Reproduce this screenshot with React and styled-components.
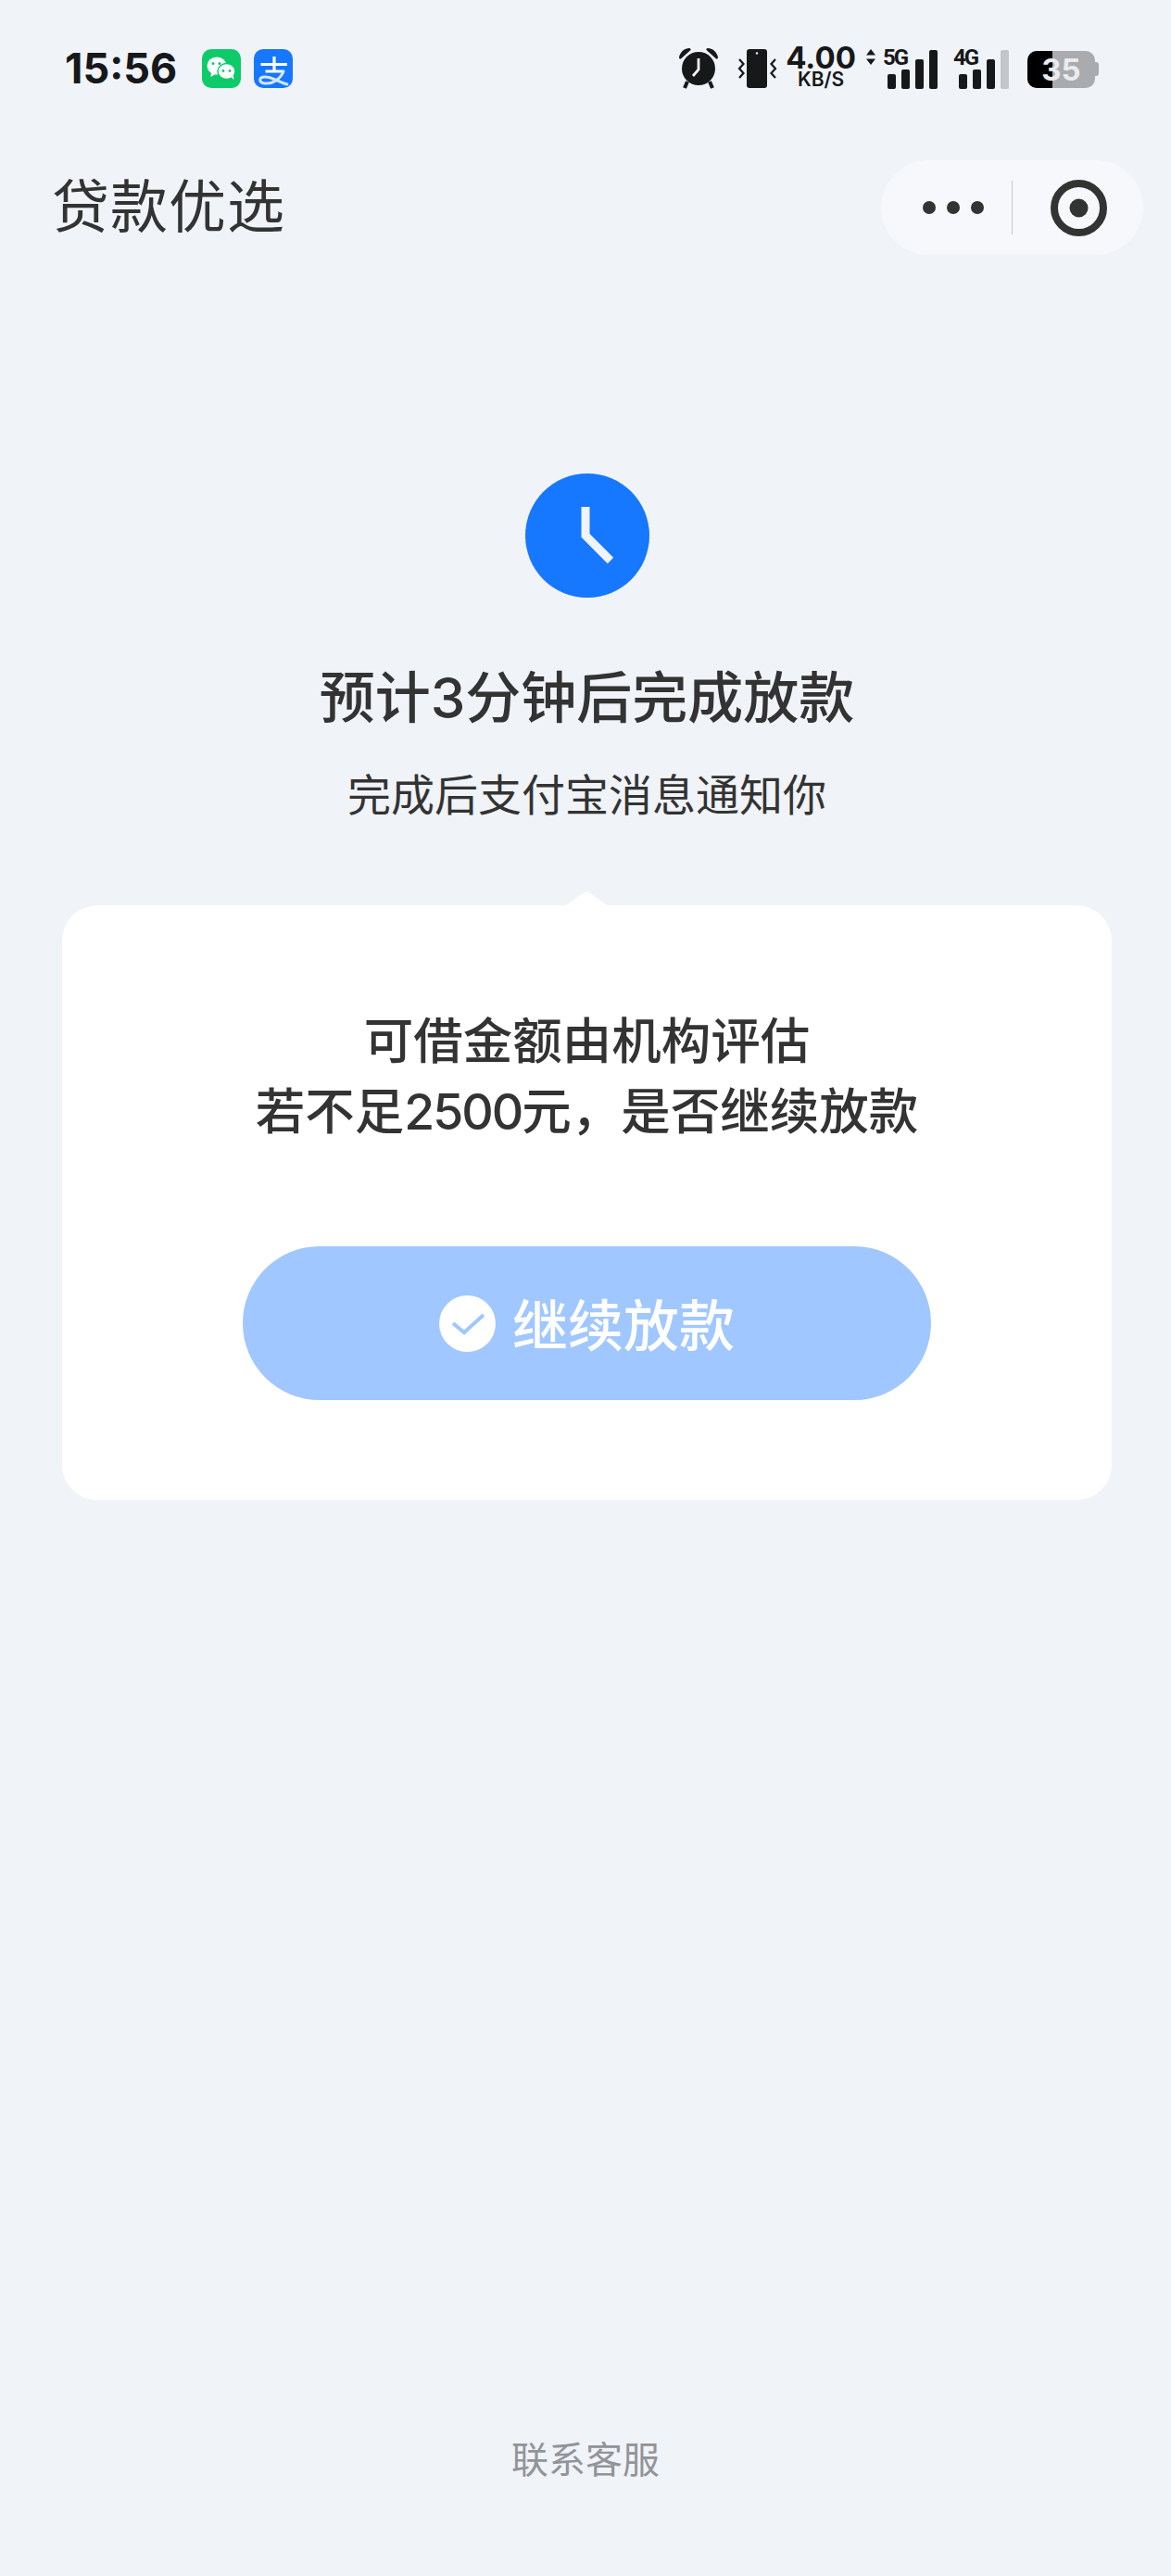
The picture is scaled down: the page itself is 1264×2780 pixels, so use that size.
import React from 'react';
import styled, { createGlobalStyle } from 'styled-components';

const GlobalStyle = createGlobalStyle`
  html, body {
    margin: 0;
    padding: 0;
    background: #f0f3f8;
  }
  * {
    box-sizing: border-box;
  }
`;

const App = () => (
  <>
    <GlobalStyle />
    <Page>
      <StatusBar>
        <StatusLeft>
          <Time>15:56</Time>
          <AppIcons>
            <WeChatIcon />
            <AlipayIcon />
          </AppIcons>
        </StatusLeft>
        <StatusRight>
          <AlarmIcon />
          <VibrateIcon />
          <Speed>
            <SpeedValue>4.00</SpeedValue>
            <SpeedUnit>KB/S</SpeedUnit>
          </Speed>
          <Signal $width={77} $ml={13}>
            <Arrows />
            <SignalLabel $left={18}>5G</SignalLabel>
            <SignalBars levels={[1, 1, 1, 1]} />
          </Signal>
          <Signal $width={60} $ml={17}>
            <SignalLabel $left={0}>4G</SignalLabel>
            <SignalBars levels={[1, 1, 1, 0]} />
          </Signal>
          <Battery>
            <BatteryFill />
            <BatteryCap />
            <BatteryText>35</BatteryText>
          </Battery>
        </StatusRight>
      </StatusBar>

      <NavBar>
        <NavTitle>贷款优选</NavTitle>
        <Capsule>
          <MoreDots>
            <Dot />
            <Dot />
            <Dot />
          </MoreDots>
          <CapsuleDivider />
          <TargetIcon />
        </Capsule>
      </NavBar>

      <Hero>
        <ClockIcon />
        <Heading>预计3分钟后完成放款</Heading>
        <SubHeading>完成后支付宝消息通知你</SubHeading>
      </Hero>

      <Card>
        <Notch />
        <CardText>
          可借金额由机构评估
          <br />
          若不足<Amount>2500</Amount>元，是否继续放款
        </CardText>
        <ContinueButton>
          <CheckIcon />
          继续放款
        </ContinueButton>
      </Card>

      <Footer>联系客服</Footer>
    </Page>
  </>
);

const WeChatIcon = () => (
  <svg width="42" height="42" viewBox="0 0 42 42">
    <rect width="42" height="42" rx="10" fill="#0ecb6a" />
    <ellipse cx="16" cy="18" rx="10.500" ry="9.500" fill="#fff" />
    <path d="M10 24l-.5 6 6-3.500z" fill="#fff" />
    <ellipse cx="26.500" cy="24" rx="9.500" ry="8.500" fill="#fff" stroke="#0ecb6a" strokeWidth="1.500" />
    <path d="M31 30l3.500 3-1-6z" fill="#fff" />
    <circle cx="12" cy="15.500" r="1.500" fill="#0ecb6a" />
    <circle cx="19" cy="15.500" r="1.500" fill="#0ecb6a" />
    <circle cx="23" cy="23.500" r="1.400" fill="#0ecb6a" />
    <circle cx="30" cy="23.500" r="1.400" fill="#0ecb6a" />
  </svg>
);

const AlipayIcon = () => (
  <svg width="42" height="42" viewBox="0 0 42 42">
    <rect width="42" height="42" rx="10" fill="#1677ff" />
    <path d="M22 8v16M7.500 16.500H36M12.500 24H32" stroke="#fff" strokeWidth="3.200" fill="none" />
    <path d="M32 24C29 32 20 38 12 37C5 36 5 30 12 30C20 30 28 36 36 38" stroke="#d5e6ff" strokeWidth="3" fill="none" strokeLinecap="round" />
  </svg>
);

const AlarmIcon = () => (
  <svg width="44" height="44" viewBox="0 0 44 44">
    <path d="M0 10C1 4 6 0 11 0c1 0 2 1 1.500 2L2.500 11C1.500 12 0 11.500 0 10zM42 10C41 4 36 0 31 0c-1 0-2 1-1.500 2l10 9c1 1 2.500.5 2.500-1z" fill="#17181a" />
    <circle cx="21" cy="22" r="18" fill="#17181a" />
    <path d="M9 36l-3 7M33 36l3 7" stroke="#17181a" strokeWidth="4" />
    <path d="M21 11v12l-6 7" stroke="#f0f3f8" strokeWidth="2.800" fill="none" />
  </svg>
);

const VibrateIcon = () => (
  <VibrateSvg width="44" height="44" viewBox="0 0 44 44">
    <rect x="10" y="1" width="22" height="42" rx="3" fill="#17181a" />
    <circle cx="21" cy="5.500" r="1.200" fill="#f0f3f8" />
    <path d="M2 12L6.500 17 2 22 6.500 27 2 32M41 12L36.500 17 41 22 36.500 27 41 32" stroke="#17181a" strokeWidth="2.200" fill="none" />
  </VibrateSvg>
);

const Arrows = () => (
  <ArrowsSvg width="10" height="17" viewBox="0 0 10 17">
    <path d="M5 0l5 6.500H0zM5 17l5-6.500H0z" fill="#17181a" />
  </ArrowsSvg>
);

const barHeights = [16, 21, 32, 42];

const SignalBars = ({ levels }) => (
  <BarsRow>
    {levels.map((on, i) => (
      <Bar key={i} $on={on} style={{ height: barHeights[i] }} />
    ))}
  </BarsRow>
);

const TargetIcon = () => (
  <svg width="61" height="61" viewBox="0 0 61 61">
    <circle cx="30.500" cy="30.500" r="26.500" fill="none" stroke="#333333" strokeWidth="8" />
    <circle cx="30.500" cy="30.500" r="10" fill="#333333" />
  </svg>
);

const ClockIcon = () => (
  <svg width="134" height="134" viewBox="0 0 134 134">
    <circle cx="67" cy="67" r="67" fill="#1677ff" />
    <path d="M65 36v31l27 27" fill="none" stroke="#f0f3f8" strokeWidth="9" />
  </svg>
);

const CheckIcon = () => (
  <CheckSvg width="61" height="61" viewBox="0 0 61 61">
    <circle cx="30.500" cy="30.500" r="30.500" fill="#fff" />
    <path d="M15 30l12 10 21-19" fill="none" stroke="#a0c7ff" strokeWidth="4" />
  </CheckSvg>
);

const Notch = () => (
  <NotchSvg width="58" height="16" viewBox="0 0 58 16">
    <path d="M0 16C8 15 10 13 14 10L25 2Q29-1 33 2L44 10C48 13 50 15 58 16Z" fill="#fff" />
  </NotchSvg>
);

const Page = styled.div`
  display: flex;
  flex-direction: column;
  width: 1264px;
  height: 2780px;
  overflow: hidden;
  background: #f0f3f8;
  color: #333333;
  font-family: Inter, "Noto Sans CJK SC", sans-serif;
`;

const StatusBar = styled.div`
  display: flex;
  justify-content: space-between;
  align-items: center;
  height: 44px;
  margin-top: 52px;
  padding: 0 82px 0 70px;
`;

const StatusLeft = styled.div`
  display: flex;
  align-items: center;
  gap: 27px;
`;

const Time = styled.div`
  font-size: 45px;
  font-weight: 700;
  line-height: 44px;
  color: #17181a;
`;

const AppIcons = styled.div`
  display: flex;
  gap: 14px;
`;

const StatusRight = styled.div`
  display: flex;
  align-items: center;
`;

const VibrateSvg = styled.svg`
  margin: 0 10px 0 19px;
`;

const Speed = styled.div`
  display: flex;
  flex-direction: column;
  align-items: center;
  width: 72px;
  color: #17181a;
`;

const SpeedValue = styled.div`
  font-size: 33px;
  font-weight: 700;
  line-height: 24px;
`;

const SpeedUnit = styled.div`
  font-size: 21px;
  font-weight: 600;
  line-height: 24px;
`;

const Signal = styled.div`
  position: relative;
  display: flex;
  justify-content: flex-end;
  align-items: flex-end;
  width: ${(p) => p.$width}px;
  height: 44px;
  margin-left: ${(p) => p.$ml}px;
`;

const ArrowsSvg = styled.svg`
  position: absolute;
  top: 1px;
  left: 0;
`;

const SignalLabel = styled.span`
  position: absolute;
  top: -2px;
  left: ${(p) => p.$left}px;
  font-family: Roboto, sans-serif;
  font-size: 24px;
  font-weight: 700;
  line-height: 24px;
  letter-spacing: -2px;
  color: #17181a;
`;

const BarsRow = styled.div`
  display: flex;
  align-items: flex-end;
  gap: 6px;
`;

const Bar = styled.div`
  width: 9px;
  border-radius: 2px;
  background: ${(p) => (p.$on ? '#17181a' : '#c4c6cb')};
`;

const Battery = styled.div`
  position: relative;
  display: flex;
  width: 73px;
  height: 40px;
  margin: 2px 0 0 20px;
  border-radius: 10px;
  background: #a9abaf;
`;

const BatteryFill = styled.div`
  width: 27px;
  height: 100%;
  border-radius: 10px 0 0 10px;
  background: #000;
`;

const BatteryCap = styled.div`
  position: absolute;
  top: 12px;
  right: -4px;
  width: 4px;
  height: 15px;
  border-radius: 0 3px 3px 0;
  background: #a9abaf;
`;

const BatteryText = styled.div`
  position: absolute;
  inset: 0;
  text-align: center;
  font-size: 33px;
  font-weight: 700;
  line-height: 40px;
  color: #e9ebee;
`;

const NavBar = styled.div`
  display: flex;
  justify-content: space-between;
  align-items: center;
  height: 102px;
  margin-top: 77px;
  padding: 0 30px 0 56px;
`;

const NavTitle = styled.div`
  font-size: 62px;
  font-weight: 400;
  line-height: 102px;
  letter-spacing: 1px;
`;

const Capsule = styled.div`
  display: flex;
  align-items: center;
  width: 283px;
  height: 102px;
  padding-left: 45px;
  border-radius: 51px;
  background: #f7f8fb;
`;

const MoreDots = styled.div`
  display: flex;
  gap: 12px;
`;

const Dot = styled.div`
  width: 14px;
  height: 14px;
  border-radius: 50%;
  background: #333333;
`;

const CapsuleDivider = styled.div`
  width: 1px;
  height: 58px;
  margin: 0 41px 0 30px;
  background: #c6c7ca;
`;

const Hero = styled.div`
  display: flex;
  flex-direction: column;
  align-items: center;
  margin-top: 236px;
  padding-left: 3px;
`;

const Heading = styled.h1`
  margin: 66px 0 0;
  font-size: 60px;
  font-weight: 500;
  line-height: 84px;
`;

const SubHeading = styled.p`
  margin: 33px 0 0;
  font-size: 47px;
  font-weight: 400;
  line-height: 60px;
`;

const Card = styled.div`
  position: relative;
  display: flex;
  flex-direction: column;
  align-items: center;
  height: 642px;
  margin: 89px 64px 0 67px;
  padding-top: 109px;
  border-radius: 38px;
  background: #ffffff;
`;

const NotchSvg = styled.svg`
  position: absolute;
  top: -15px;
  left: 537px;
`;

const CardText = styled.div`
  font-size: 53.500px;
  font-weight: 500;
  line-height: 76px;
  text-align: center;
`;

const Amount = styled.span`
  letter-spacing: -2px;
`;

const ContinueButton = styled.button`
  display: flex;
  justify-content: center;
  align-items: center;
  width: 743px;
  height: 166px;
  margin-top: 107px;
  padding: 0 0 4px;
  border: 0;
  border-radius: 83px;
  background: #a0c7ff;
  color: #ffffff;
  font-family: inherit;
  font-size: 60px;
  font-weight: 500;
`;

const CheckSvg = styled.svg`
  margin: 4px 18px 0 0;
`;

const Footer = styled.div`
  margin-top: auto;
  margin-bottom: 97px;
  text-align: center;
  font-size: 40px;
  line-height: 56px;
  color: #929498;
`;

export default App;
